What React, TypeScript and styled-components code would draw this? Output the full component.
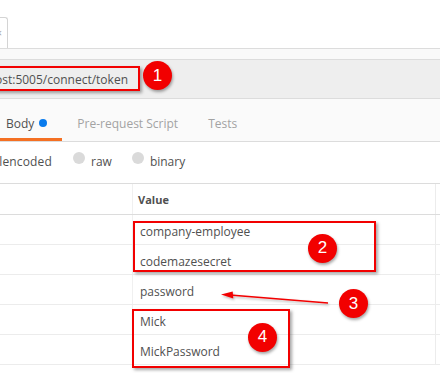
import React from "react";
import styled, { createGlobalStyle } from "styled-components";

const GlobalStyle = createGlobalStyle`
  html, body {
    margin: 0;
    padding: 0;
    background: #fff;
  }
  body {
    font-family: "Open Sans", "Liberation Sans", sans-serif;
    color: #505050;
    overflow: hidden;
  }
`;

const Screen = styled.div`
  position: relative;
  width: 440px;
  height: 373px;
  overflow: hidden;
  background: #fff;
`;

/* top tab strip */
const TabStrip = styled.div`
  height: 48px;
  display: flex;
  align-items: flex-end;
  border-bottom: 1px solid #dcdcdc;
`;

const RequestTab = styled.div`
  width: 7px;
  height: 30px;
  border: 1px solid #d4d4d4;
  border-left: none;
  border-bottom: none;
  border-top-right-radius: 3px;
  background: #fff;
  display: flex;
  align-items: center;
  justify-content: flex-end;
  overflow: hidden;
`;

const TabGlyph = styled.span`
  flex-shrink: 0;
  margin-right: 5px;
  font-size: 10px;
  color: #9a9a9a;
  white-space: nowrap;
`;

const SubBand = styled.div`
  height: 10px;
  background: #f9f9f9;
  border-bottom: 1px solid #dcdcdc;
`;

/* url bar */
const UrlBar = styled.div`
  height: 38px;
  background: #eeeeee;
  border-bottom: 1px solid #dcdcdc;
  display: flex;
  align-items: center;
`;

const Clipped = styled.div<{ $w: number }>`
  width: ${(p) => p.$w}px;
  flex-shrink: 0;
  display: flex;
  justify-content: flex-end;
  overflow: hidden;
  white-space: nowrap;
`;

const UrlText = styled.span`
  flex-shrink: 0;
  font-size: 12px;
  color: #505050;
`;

/* body tabs */
const TabRow = styled.div`
  height: 42px;
  background: #fafafa;
  border-bottom: 1px solid #dcdcdc;
  display: flex;
`;

const Tab = styled.div<{ $active?: boolean }>`
  display: flex;
  align-items: center;
  padding: 9px 15px 0;
  font-size: 12px;
  color: ${(p) => (p.$active ? "#505050" : "#a3a3a3")};
  border-bottom: 3px solid ${(p) => (p.$active ? "#f47023" : "transparent")};
  white-space: nowrap;
  &:first-child {
    margin-left: -9px;
  }
`;

const Dot = styled.span`
  width: 8px;
  height: 8px;
  border-radius: 50%;
  background: #097bed;
  margin-left: 5px;
`;

/* body mode radios */
const ModeRow = styled.div`
  height: 42px;
  border-bottom: 1px solid #dcdcdc;
  display: flex;
  align-items: center;
  padding-bottom: 3px;
  box-sizing: border-box;
  font-size: 12px;
  color: #505050;
`;

const ModeLabel = styled.span`
  flex-shrink: 0;
  letter-spacing: 0.15px;
`;

const RadioOption = styled.div`
  display: flex;
  align-items: center;
  margin-left: 21px;
  & + & {
    margin-left: 20px;
  }
`;

const RadioCircle = styled.span`
  width: 12px;
  height: 12px;
  border-radius: 50%;
  background: #dadada;
  margin-right: 6px;
  margin-bottom: 6px;
`;

/* key-value table */
const Table = styled.div`
  display: flex;
  flex-direction: column;
`;

const Row = styled.div<{ $head?: boolean }>`
  display: flex;
  height: ${(p) => (p.$head ? 30 : 29)}px;
  border-bottom: 1px solid ${(p) => (p.$head ? "#dcdcdc" : "#ececec")};
`;

const KeyCell = styled.div`
  width: 132px;
  border-right: 1px solid #f0f0f0;
`;

const ValueCell = styled.div<{ $head?: boolean }>`
  width: 303px;
  border-right: 1px solid #ececec;
  display: flex;
  align-items: center;
  padding-left: ${(p) => (p.$head ? 5 : 7)}px;
  padding-top: ${(p) => (p.$head ? 1 : 3)}px;
  box-sizing: border-box;
  font-size: ${(p) => (p.$head ? 11 : 12)}px;
  font-weight: ${(p) => (p.$head ? 700 : 400)};
  color: #505050;
`;

const DescCell = styled.div`
  flex: 1;
`;

/* annotations */
const Highlight = styled.div`
  position: absolute;
  box-sizing: border-box;
  border: 2px solid #f20000;
  box-shadow: 2px 2px 3px rgba(0, 0, 0, 0.35);
`;

const Badge = styled.div`
  position: absolute;
  width: 29px;
  height: 29px;
  border-radius: 50%;
  background: #f20000;
  color: #fff;
  font-family: "Liberation Sans", Arial, sans-serif;
  font-size: 17px;
  display: flex;
  align-items: center;
  justify-content: center;
  box-shadow: 1px 2px 3px rgba(0, 0, 0, 0.35);
`;

const ArrowLayer = styled.svg`
  position: absolute;
  left: 0;
  top: 0;
  pointer-events: none;
`;

const values = ["company-employee", "codemazesecret", "password", "Mick", "MickPassword"];

const boxes = [
  { left: -10, top: 66, width: 150, height: 25 },
  { left: 133, top: 221, width: 243, height: 51 },
  { left: 132, top: 309, width: 158, height: 59 },
];

const badges = [
  { n: 1, cx: 157.5, cy: 75.5 },
  { n: 2, cx: 322.5, cy: 248 },
  { n: 3, cx: 353.5, cy: 303.5 },
  { n: 4, cx: 262.5, cy: 337 },
];

const App: React.FC = () => {
  return (
    <>
      <GlobalStyle />
      <Screen>
        <TabStrip>
          <RequestTab>
            <TabGlyph>×</TabGlyph>
          </RequestTab>
        </TabStrip>
        <SubBand />
        <UrlBar>
          <Clipped $w={128}>
            <UrlText>http://localhost:5005/connect/token</UrlText>
          </Clipped>
        </UrlBar>
        <TabRow>
          <Tab $active>
            Body
            <Dot />
          </Tab>
          <Tab>Pre-request Script</Tab>
          <Tab>Tests</Tab>
        </TabRow>
        <ModeRow>
          <Clipped $w={52}>
            <ModeLabel>x-www-form-urlencoded</ModeLabel>
          </Clipped>
          <RadioOption>
            <RadioCircle />
            raw
          </RadioOption>
          <RadioOption>
            <RadioCircle />
            binary
          </RadioOption>
        </ModeRow>
        <Table>
          <Row $head>
            <KeyCell />
            <ValueCell $head>Value</ValueCell>
            <DescCell />
          </Row>
          {values.map((v) => (
            <Row key={v}>
              <KeyCell />
              <ValueCell>{v}</ValueCell>
              <DescCell />
            </Row>
          ))}
        </Table>

        {boxes.map((b, i) => (
          <Highlight key={i} style={b} />
        ))}
        <ArrowLayer width={440} height={373}>
          <defs>
            <filter id="sh" x="-10%" y="-50%" width="120%" height="200%">
              <feDropShadow dx="1" dy="1.5" stdDeviation="0.8" floodColor="#000" floodOpacity="0.3" />
            </filter>
          </defs>
          <g filter="url(#sh)">
            <line x1={328} y1={303} x2={230} y2={295} stroke="#f20000" strokeWidth={1.5} />
            <polygon points="221,294.5 232.7,291.5 233.3,298.5" fill="#f20000" />
          </g>
        </ArrowLayer>
        {badges.map((b) => (
          <Badge key={b.n} style={{ left: b.cx - 14.5, top: b.cy - 14.5 }}>
            {b.n}
          </Badge>
        ))}
      </Screen>
    </>
  );
};

export default App;
